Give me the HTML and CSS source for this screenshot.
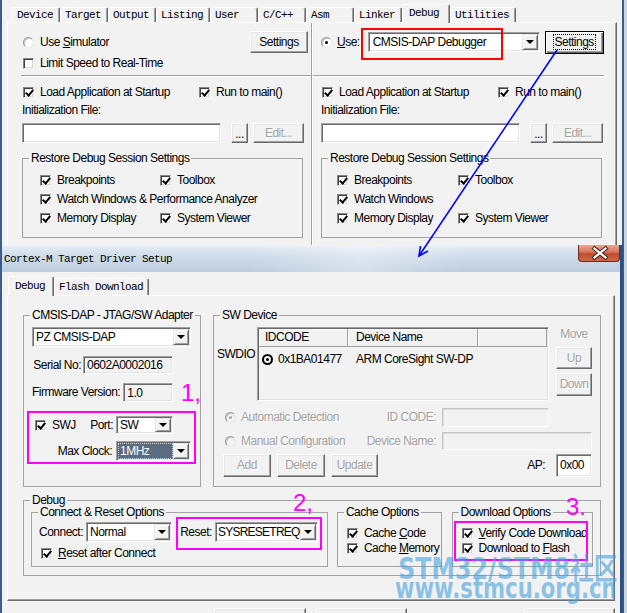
FILE: index.html
```html
<!DOCTYPE html>
<html lang="en">
<head>
<meta charset="utf-8">
<title>Options for Target - Debug</title>
<link rel="stylesheet" href="styles.css">
</head>
<body>
<main class="desk">

  <!-- Options for Target: Debug page -->
  <section class="win opts">
    <nav class="tabs">
      <span class="tab">Device</span>
      <span class="tab">Target</span>
      <span class="tab">Output</span>
      <span class="tab">Listing</span>
      <span class="tab">User</span>
      <span class="tab">C/C++</span>
      <span class="tab">Asm</span>
      <span class="tab">Linker</span>
      <span class="tab on">Debug</span>
      <span class="tab">Utilities</span>
    </nav>
    <div class="panel opts-panel">
      <div class="half half-l">
        <div class="row r-use">
          <span class="opt"><i class="radio"></i><span>Use <u>S</u>imulator</span></span>
          <button type="button" class="btn btn-set">Settings</button>
        </div>
        <div class="row r-limit">
          <span class="opt"><i class="chk"></i>Limit Speed to Real-Time</span>
        </div>
        <hr class="etch">
        <div class="row r-load">
          <span class="opt w-load"><i class="chk on"></i>Load Application at Startup</span>
          <span class="opt"><i class="chk on"></i>Run to main()</span>
        </div>
        <div class="r-lbl">Initialization File:</div>
        <div class="row r-file">
          <span class="field sunk w-file"></span>
          <button type="button" class="btn btn-dots">...</button>
          <button type="button" class="btn btn-edit" disabled>Edit...</button>
        </div>
        <fieldset class="grp restore">
          <legend>Restore Debug Session Settings</legend>
          <div class="checks">
            <span class="opt"><i class="chk on"></i>Breakpoints</span>
            <span class="opt"><i class="chk on"></i>Toolbox</span>
            <span class="opt span2"><i class="chk on"></i>Watch Windows &amp; Performance Analyzer</span>
            <span class="opt"><i class="chk on"></i>Memory Display</span>
            <span class="opt"><i class="chk on"></i>System Viewer</span>
          </div>
        </fieldset>
      </div>
      <div class="vsep"></div>
      <div class="half half-r">
        <div class="row r-use">
          <span class="opt use"><i class="radio on"></i><span><u>U</u>se:</span></span>
          <span class="combo sunk w-dbg"><span class="val">CMSIS-DAP Debugger</span><span class="dd"></span></span>
          <button type="button" class="btn btn-set def"><span class="focus">Settings</span></button>
        </div>
        <div class="row r-limit"></div>
        <hr class="etch">
        <div class="row r-load">
          <span class="opt w-load"><i class="chk on"></i>Load Application at Startup</span>
          <span class="opt"><i class="chk on"></i>Run to main()</span>
        </div>
        <div class="r-lbl">Initialization File:</div>
        <div class="row r-file">
          <span class="field sunk w-file"></span>
          <button type="button" class="btn btn-dots">...</button>
          <button type="button" class="btn btn-edit" disabled>Edit...</button>
        </div>
        <fieldset class="grp restore">
          <legend>Restore Debug Session Settings</legend>
          <div class="checks">
            <span class="opt"><i class="chk on"></i>Breakpoints</span>
            <span class="opt"><i class="chk on"></i>Toolbox</span>
            <span class="opt span2"><i class="chk on"></i>Watch Windows</span>
            <span class="opt"><i class="chk on"></i>Memory Display</span>
            <span class="opt"><i class="chk on"></i>System Viewer</span>
          </div>
        </fieldset>
      </div>
    </div>
  </section>

  <!-- Cortex-M Target Driver Setup dialog -->
  <section class="win dlg">
    <header class="titlebar">
      <span class="title">Cortex-M Target Driver Setup</span>
      <span class="close">
        <svg width="42" height="17" viewBox="0 0 42 17">
          <path d="M15.5 3.5 L26.5 12.5 M26.5 3.5 L15.5 12.5" stroke="#4a2a26" stroke-width="4.2" stroke-linecap="square"/>
          <path d="M15.5 3.5 L26.5 12.5 M26.5 3.5 L15.5 12.5" stroke="#fff" stroke-width="2.2" stroke-linecap="square"/>
        </svg>
      </span>
    </header>
    <div class="client">
      <nav class="tabs dtabs">
        <span class="tab on">Debug</span>
        <span class="tab">Flash Download</span>
      </nav>
      <div class="panel dpanel">
        <div class="grp-row">
          <fieldset class="grp adapter">
            <legend>CMSIS-DAP - JTAG/SW Adapter</legend>
            <div class="gb">
              <span class="combo sunk w-adp"><span class="val">PZ CMSIS-DAP</span><span class="dd"></span></span>
              <div class="row r-end r-serial"><span>Serial No:</span><span class="field sunk ro w-serial">0602A0002016</span></div>
              <div class="row r-end r-fw"><span>Firmware Version:</span><span class="field sunk ro w-fw">1.0</span></div>
              <div class="row r-swj">
                <span class="opt"><i class="chk on"></i>SWJ</span>
                <span class="port">Port:</span>
                <span class="combo sunk w-port"><span class="val">SW</span><span class="dd"></span></span>
              </div>
              <div class="row r-end r-clock"><span>Max Clock:</span><span class="combo sunk w-clock"><span class="val sel">1MHz</span><span class="dd"></span></span></div>
            </div>
          </fieldset>
          <fieldset class="grp swdev">
            <legend>SW Device</legend>
            <div class="gb">
              <div class="swtop">
                <span class="swdio">SWDIO</span>
                <div class="list sunk">
                  <div class="lhead"><span class="h1">IDCODE</span><span class="h2">Device Name</span><span class="h3"></span></div>
                  <div class="lrow"><span class="c1"><i class="ring"></i>0x1BA01477</span><span class="c2">ARM CoreSight SW-DP</span></div>
                </div>
                <div class="move">
                  <span class="off mv">Move</span>
                  <button type="button" class="btn b-up" disabled>Up</button>
                  <button type="button" class="btn b-down" disabled>Down</button>
                </div>
              </div>
              <div class="swform">
                <span class="opt off"><i class="radio dis on"></i>Automatic Detection</span>
                <span class="off rl">ID CODE:</span>
                <span class="field dis w-id"></span>
                <span class="opt off"><i class="radio dis"></i>Manual Configuration</span>
                <span class="off rl">Device Name:</span>
                <span class="field dis w-name"></span>
              </div>
              <div class="row swbtns">
                <button type="button" class="btn b-add" disabled>Add</button>
                <button type="button" class="btn b-del" disabled>Delete</button>
                <button type="button" class="btn b-upd" disabled>Update</button>
                <span class="ap">AP:</span>
                <span class="field sunk w-ap">0x00</span>
              </div>
            </div>
          </fieldset>
        </div>
        <fieldset class="grp debug">
          <legend>Debug</legend>
          <div class="gb">
            <div class="dbg-row">
              <fieldset class="grp conn">
                <legend>Connect &amp; Reset Options</legend>
                <div class="gb">
                  <div class="row r-conn">
                    <span>Connect:</span>
                    <span class="combo sunk w-conn"><span class="val">Normal</span><span class="dd"></span></span>
                    <span class="reset-lbl">Reset:</span>
                    <span class="combo sunk w-reset"><span class="val">SYSRESETREQ</span><span class="dd"></span></span>
                  </div>
                  <div class="row r-rac">
                    <span class="opt"><i class="chk on"></i><span><u>R</u>eset after Connect</span></span>
                  </div>
                </div>
              </fieldset>
              <fieldset class="grp cache">
                <legend>Cache Options</legend>
                <div class="gb">
                  <div class="row r-c"><span class="opt"><i class="chk on"></i><span>Cache <u>C</u>ode</span></span></div>
                  <div class="row r-c"><span class="opt"><i class="chk on"></i><span>Cache <u>M</u>emory</span></span></div>
                </div>
              </fieldset>
              <fieldset class="grp dload">
                <legend>Download Options</legend>
                <div class="gb">
                  <div class="row r-c"><span class="opt"><i class="chk on"></i><span><u>V</u>erify Code Download</span></span></div>
                  <div class="row r-c"><span class="opt"><i class="chk on"></i><span>Download to <u>F</u>lash</span></span></div>
                </div>
              </fieldset>
            </div>
          </div>
        </fieldset>
      </div>
      <div class="dfoot">
        <button type="button" class="btn f-ok">OK</button>
        <button type="button" class="btn f-cancel">Cancel</button>
        <button type="button" class="btn f-help">Help</button>
      </div>
    </div>
  </section>

  <!-- hand-drawn markup over the windows -->
  <svg class="arrow" width="627" height="613" viewBox="0 0 627 613">
    <path d="M557 50 L419 256" stroke="#0000ff" stroke-width="1.6" fill="none"/>
    <path d="M428 251 L419 256 L420.5 246" stroke="#0000ff" stroke-width="1.6" fill="none"/>
  </svg>
  <div class="mark mk-red"></div>
  <div class="mark mk-pink mk-1"></div>
  <div class="mark mk-pink mk-2"></div>
  <div class="mark mk-pink mk-3"></div>
  <span class="num n1">1,</span>
  <span class="num n2">2,</span>
  <span class="num n3">3.</span>

  <div class="wm">
    <span class="l1">STM32/STM8社区</span>
    <span class="l2">www.stmcu.org.cn</span>
  </div>
</main>
</body>
</html>
```

FILE: styles.css
```css
* { box-sizing: border-box; }

html, body {
  margin: 0;
  padding: 0;
  width: 627px;
  height: 613px;
  overflow: hidden;
  background: #c8d5e4;
}

body {
  font: 12px/15px "Liberation Sans", Arial, sans-serif;
  letter-spacing: -0.5px;
  color: #000;
}

.desk {
  position: relative;
  width: 627px;
  height: 613px;
  overflow: hidden;
}

/* ---------- generic window parts ---------- */
.win {
  position: absolute;
  left: 0;
  background: #f2f2f2;
}

.opts {
  top: 0;
  width: 624px;
  height: 613px;
  border-left: 2px solid #3a5d8e;
  border-right: 2px solid #3a5d8e;
}

.dlg {
  top: 245px;
  width: 623px;
  height: 400px;
  border-left: 2px solid #3a5d8e;
  border-right: 3px solid #2e5080;
}

.tabs {
  display: flex;
  align-items: flex-end;
  height: 22px;
  padding-left: 10px;
  font: 11px/14px "Liberation Mono", "DejaVu Sans Mono", monospace;
  letter-spacing: -0.6px;
}

.tab {
  height: 15px;
  min-width: 48px;
  padding: 0 6px 0 4px;
  white-space: nowrap;
  border: 1px solid;
  border-bottom: 0;
  border-color: #fff #6a6a6a transparent #fff;
  box-shadow: inset -1px 0 #a0a0a0;
  border-radius: 2px 2px 0 0;
  background: #f2f2f2;
}

.tab.on {
  height: 19px;
  margin-bottom: -1px;
  padding-left: 6px;
  line-height: 16px;
  position: relative;
  z-index: 1;
}

.panel {
  border: 1px solid;
  border-color: #fff #6a6a6a #6a6a6a #fff;
  box-shadow: inset -1px -1px #a0a0a0;
}

.row {
  display: flex;
  align-items: center;
  white-space: nowrap;
}

.opt {
  display: inline-flex;
  align-items: center;
  gap: 6px;
  white-space: nowrap;
}

.off {
  color: #a2a2a2;
  text-shadow: 1px 1px #fff;
}

u { text-decoration: underline; text-underline-offset: 1px; }

/* ---------- controls ---------- */
.chk {
  position: relative;
  flex: none;
  width: 11px;
  height: 11px;
  background: #fff;
  border: 1px solid;
  border-color: #858585 #f4f4f4 #f4f4f4 #858585;
  box-shadow: inset 1px 1px #404040, inset -1px -1px #d8d8d8;
}

.chk.on::after {
  content: "";
  position: absolute;
  left: 3px;
  top: 0px;
  width: 3px;
  height: 6px;
  border: solid #000;
  border-width: 0 2px 2px 0;
  transform: rotate(40deg);
}

.radio {
  position: relative;
  flex: none;
  width: 11px;
  height: 11px;
  border-radius: 50%;
  background: #fff;
  border: 1px solid;
  border-color: #9a9a9a #e8e8e8 #e8e8e8 #9a9a9a;
  box-shadow: inset 1px 1px #c8c8c8;
}

.radio.on::after {
  content: "";
  position: absolute;
  left: 3px;
  top: 3px;
  width: 3px;
  height: 3px;
  border-radius: 50%;
  background: #000;
}

.radio.dis { background: #f2f2f2; }
.radio.dis.on::after { background: #a8a8a8; }

.ring {
  position: relative;
  flex: none;
  width: 11px;
  height: 11px;
  border-radius: 50%;
  border: 2px solid #000;
}

.ring::after {
  content: "";
  position: absolute;
  left: 2px;
  top: 2px;
  width: 3px;
  height: 3px;
  border-radius: 50%;
  background: #000;
}

.sunk {
  border: 1px solid;
  border-color: #a0a0a0 #fff #fff #a0a0a0;
  box-shadow: inset 1px 1px #696969, inset -1px -1px #e3e3e3;
}

.field {
  display: block;
  height: 20px;
  padding: 1px 3px;
  line-height: 16px;
  background: #fff;
  white-space: nowrap;
}

.field.ro { background: #f2f2f2; }

.field.dis {
  background: #f2f2f2;
  border: 1px solid;
  border-color: #c4c4c4 #fff #fff #c4c4c4;
  box-shadow: inset 1px 1px #dcdcdc;
}

.combo {
  display: flex;
  height: 20px;
  padding: 1px;
  background: #fff;
}

.combo .val {
  flex: 1;
  padding-left: 2px;
  line-height: 16px;
  overflow: hidden;
  white-space: nowrap;
}

.combo .val.sel {
  background: #5a6c80;
  color: #fff;
  outline: 1px dotted #c8d0d8;
  outline-offset: -1px;
}

.combo .dd {
  position: relative;
  flex: none;
  width: 16px;
  background: #f2f2f2;
  border: 1px solid;
  border-color: #e3e3e3 #696969 #696969 #e3e3e3;
  box-shadow: inset 1px 1px #fff, inset -1px -1px #a0a0a0;
}

.combo .dd::after {
  content: "";
  position: absolute;
  left: 50%;
  top: 50%;
  margin: -2px 0 0 -4px;
  border-top: 4px solid #000;
  border-left: 4px solid transparent;
  border-right: 4px solid transparent;
}

.btn {
  flex: none;
  margin: 0;
  padding: 0;
  height: 22px;
  font: inherit;
  letter-spacing: inherit;
  color: #000;
  text-align: center;
  background: #f2f2f2;
  border: 1px solid;
  border-color: #fff #696969 #696969 #fff;
  box-shadow: inset -1px -1px #a0a0a0, inset 1px 1px #e8e8e8;
}

.btn:disabled {
  color: #a2a2a2;
  text-shadow: 1px 1px #fff;
}

.btn.def {
  border-color: #000;
  box-shadow: inset 1px 1px #fff, inset -1px -1px #696969, inset -2px -2px #a0a0a0;
}

.btn .focus {
  display: inline-block;
  padding: 0 1px;
  line-height: 14px;
  outline: 1px dotted #000;
}

/* group boxes */
.grp {
  margin: 0;
  padding: 0;
  min-width: 0;
  border: 1px solid #a3a3a3;
}

.grp > legend {
  margin-left: 6px;
  padding: 0 2px;
  height: 14px;
  line-height: 14px;
  white-space: nowrap;
}

/* ---------- Options for Target page ---------- */
.opts-panel {
  margin-left: 5px;
  width: 610px;
  height: 600px;
  display: grid;
  grid-template-columns: 303px 2px 1fr;
}

.half-l { padding: 8px 3px 0 14px; }
.half-r { padding: 8px 13px 0 8px; }

.vsep {
  border-left: 1px solid #a0a0a0;
  border-right: 1px solid #fff;
}

.r-use {
  height: 22px;
  justify-content: space-between;
}

.half-l .r-use .opt { margin-left: 1px; }

.half-r .r-use { justify-content: flex-start; }
.half-r .use { gap: 5px; }

.btn-set { width: 58px; }
.btn-set.def { width: 59px; height: 23px; margin-left: 5px; }

.w-dbg { width: 172px; margin-left: 8px; }
.w-dbg .val { padding-left: 3px; }

.r-limit { height: 18px; margin-top: 1px; padding-left: 1px; }

.etch {
  height: 0;
  margin: 3px -3px 0 -1px;
  border: 0;
  border-top: 1px solid #a0a0a0;
  border-bottom: 1px solid #fff;
}

.half-r .etch { margin: 3px 0 0 -8px; }

.r-load { height: 18px; margin-top: 6px; padding-left: 1px; }
.w-load { width: 176px; }

.r-lbl { height: 17px; margin-top: 1px; line-height: 17px; }

.r-file { height: 20px; margin-top: 4px; }
.w-file { width: 199px; }
.btn-dots { width: 17px; height: 20px; margin-left: 10px; line-height: 20px; }
.btn-edit { width: 51px; height: 20px; margin-left: 5px; }

.restore { width: 281px; margin-top: 8px; }

.checks {
  display: grid;
  grid-template-columns: 120px 1fr;
  grid-auto-rows: 19px;
  align-items: center;
  padding: 6px 0 9px 17px;
}

.half-r .checks { grid-template-columns: 121px 1fr; padding-left: 15px; }

.span2 { grid-column: 1 / 3; }

/* ---------- driver setup dialog ---------- */
.titlebar {
  display: flex;
  align-items: flex-start;
  height: 27px;
  background:
    linear-gradient(105deg, rgba(255,255,255,0) 40%, rgba(255,255,255,.35) 58%, rgba(255,255,255,0) 75%),
    linear-gradient(180deg, #e4ecf5 0%, #cfdbe9 40%, #bccde0 100%);
  border-top: 1px solid #eef3f8;
}

.title {
  padding: 6px 0 0 2px;
  font: 11px/14px "Liberation Mono", "DejaVu Sans Mono", monospace;
  letter-spacing: -0.6px;
}

.close {
  margin-left: auto;
  width: 42px;
  height: 17px;
  margin-top: -1px;
  border: 1px solid #6b2b20;
  border-top: 0;
  border-radius: 0 0 4px 4px;
  background: linear-gradient(180deg, #e9a893 0%, #d87359 45%, #c24a30 55%, #cf6a4a 100%);
}

.close svg { display: block; }

.client { padding-left: 5px; }

.dtabs {
  height: 23px;
  padding-left: 3px;
}

.dtabs .tab {
  height: 17px;
  min-width: 46px;
  padding: 0 5px 0 4px;
  line-height: 16px;
}

.dtabs .tab.on {
  height: 20px;
  margin-left: -2px;
  padding-left: 6px;
  line-height: 18px;
}

.dpanel {
  width: 608px;
  height: 306px;
  padding: 12px 13px 0 15px;
}

.grp-row {
  display: flex;
  gap: 12px;
}

.adapter { width: 178px; }
.adapter .gb { padding: 5px 9px 0 8px; }

.w-adp { width: 159px; }

.r-end { justify-content: flex-end; padding-right: 18px; }

.r-serial { height: 18px; margin-top: 9px; }
.w-serial { width: 90px; height: 18px; margin-left: 2px; line-height: 15px; padding-top: 1px; }

.r-fw { height: 19px; margin-top: 9px; }
.w-fw { width: 57px; height: 19px; margin-left: 3px; }

.r-swj { height: 18px; margin-top: 14px; padding-right: 18px; }
.r-swj .opt { margin-left: 3px; }
.port { margin-left: auto; }
.w-port { width: 57px; height: 18px; margin-left: 3px; }
.w-port .val { line-height: 14px; }

.r-clock { height: 20px; margin-top: 7px; padding-right: 0; }
.w-clock { width: 75px; margin-left: 4px; }

.swdev { width: 388px; }
.swdev .gb { padding: 5px 8px 9px 3px; }

.swtop { display: flex; align-items: flex-start; }
.swdio { width: 40px; margin-top: 20px; line-height: 14px; }

.list {
  width: 292px;
  height: 74px;
  padding: 1px;
  background: #f2f2f2;
}

.lhead {
  display: flex;
  height: 18px;
  line-height: 16px;
  border-bottom: 1px solid #a0a0a0;
  box-shadow: inset 0 1px #fff;
}

.lhead span {
  border-right: 1px solid #a0a0a0;
  box-shadow: inset 1px 0 #fff;
}

.h1 { width: 89px; padding-left: 6px; }
.h2 { width: 130px; padding-left: 8px; }
.h3 { flex: 1; }

.lrow {
  display: flex;
  align-items: center;
  height: 16px;
  margin-top: 4px;
  white-space: nowrap;
}

.c1 { display: flex; align-items: center; gap: 5px; width: 97px; padding-left: 3px; }

.move {
  display: flex;
  flex-direction: column;
  width: 36px;
  margin-left: 7px;
}

.mv { text-align: center; line-height: 14px; }
.b-up { height: 22px; margin-top: 6px; }
.b-down { height: 23px; margin-top: 4px; }

.swform {
  display: grid;
  grid-template-columns: 1fr auto 150px;
  grid-template-rows: 19px 18px;
  column-gap: 6px;
  row-gap: 5px;
  align-items: center;
  margin-top: 7px;
  white-space: nowrap;
}

.swform .opt { margin-left: 8px; gap: 5px; }
.rl { text-align: right; }
.w-id { width: 107px; height: 19px; }
.w-name { width: 150px; height: 18px; }

.swbtns { height: 23px; margin-top: 4px; }
.swbtns .btn { height: 23px; margin-left: 6px; }
.b-add, .b-del { width: 48px; }
.b-upd { width: 47px; }
.ap { margin-left: auto; }
.w-ap { width: 36px; height: 23px; margin-left: 11px; line-height: 19px; }

.debug { width: 578px; margin-top: 6px; }
.debug > .gb { padding: 0 7px 8px 7px; }

.dbg-row {
  display: flex;
  margin-top: -2px;
}

.conn { width: 298px; }
.conn .gb { padding: 3px 9px 5px 7px; }

.r-conn { height: 20px; }
.w-conn { width: 87px; margin-left: 3px; }
.reset-lbl { margin-left: 8px; }
.w-reset { width: 104px; margin-left: 3px; }
.w-reset .val { padding-left: 1px; letter-spacing: -0.75px; }

.r-rac { height: 16px; margin-top: 3px; padding-left: 2px; }

.cache { width: 105px; margin-left: 9px; }
.dload { width: 142px; margin-left: 10px; }
.cache .gb, .dload .gb { padding: 7px 0 0 9px; }
.r-c { height: 15px; }

.dfoot { display: flex; margin-top: 7px; }
.dfoot .btn { height: 23px; }
.f-ok { width: 92px; margin-left: 207px; }
.f-cancel { width: 91px; margin-left: 10px; }
.f-help { width: 91px; margin-left: 117px; }

/* ---------- markup layer ---------- */
.arrow {
  position: absolute;
  left: 0;
  top: 0;
  pointer-events: none;
}

.mark {
  position: absolute;
  border: 2px solid;
}

.mk-red { left: 361px; top: 28px; width: 142px; height: 32px; border-color: #f00; }
.mk-pink { border-color: #f0f; }
.mk-1 { left: 27px; top: 411px; width: 169px; height: 53px; }
.mk-2 { left: 176px; top: 517px; width: 146px; height: 33px; }
.mk-3 { left: 454px; top: 521px; width: 134px; height: 40px; }

.num {
  position: absolute;
  color: #f0f;
  font: 24px/24px "Liberation Sans", sans-serif;
  letter-spacing: 0;
}

.n1 { left: 181px; top: 381px; }
.n2 { left: 293px; top: 491px; }
.n3 { left: 566px; top: 495px; }

.wm {
  position: absolute;
  right: 10px;
  top: 555px;
  display: flex;
  flex-direction: column;
  align-items: flex-end;
  color: rgba(70, 160, 220, .6);
  font-family: "DejaVu Sans", "Noto Sans CJK SC", sans-serif;
  font-weight: bold;
  letter-spacing: 0;
  white-space: nowrap;
  pointer-events: none;
}

.wm .l1 {
  font-size: 30px;
  line-height: 28px;
  transform: scaleX(.79);
  transform-origin: right center;
}

.wm .l2 {
  font-size: 29px;
  line-height: 28px;
  margin-top: -9px;
  transform: scaleX(.73);
  transform-origin: right center;
}
```
